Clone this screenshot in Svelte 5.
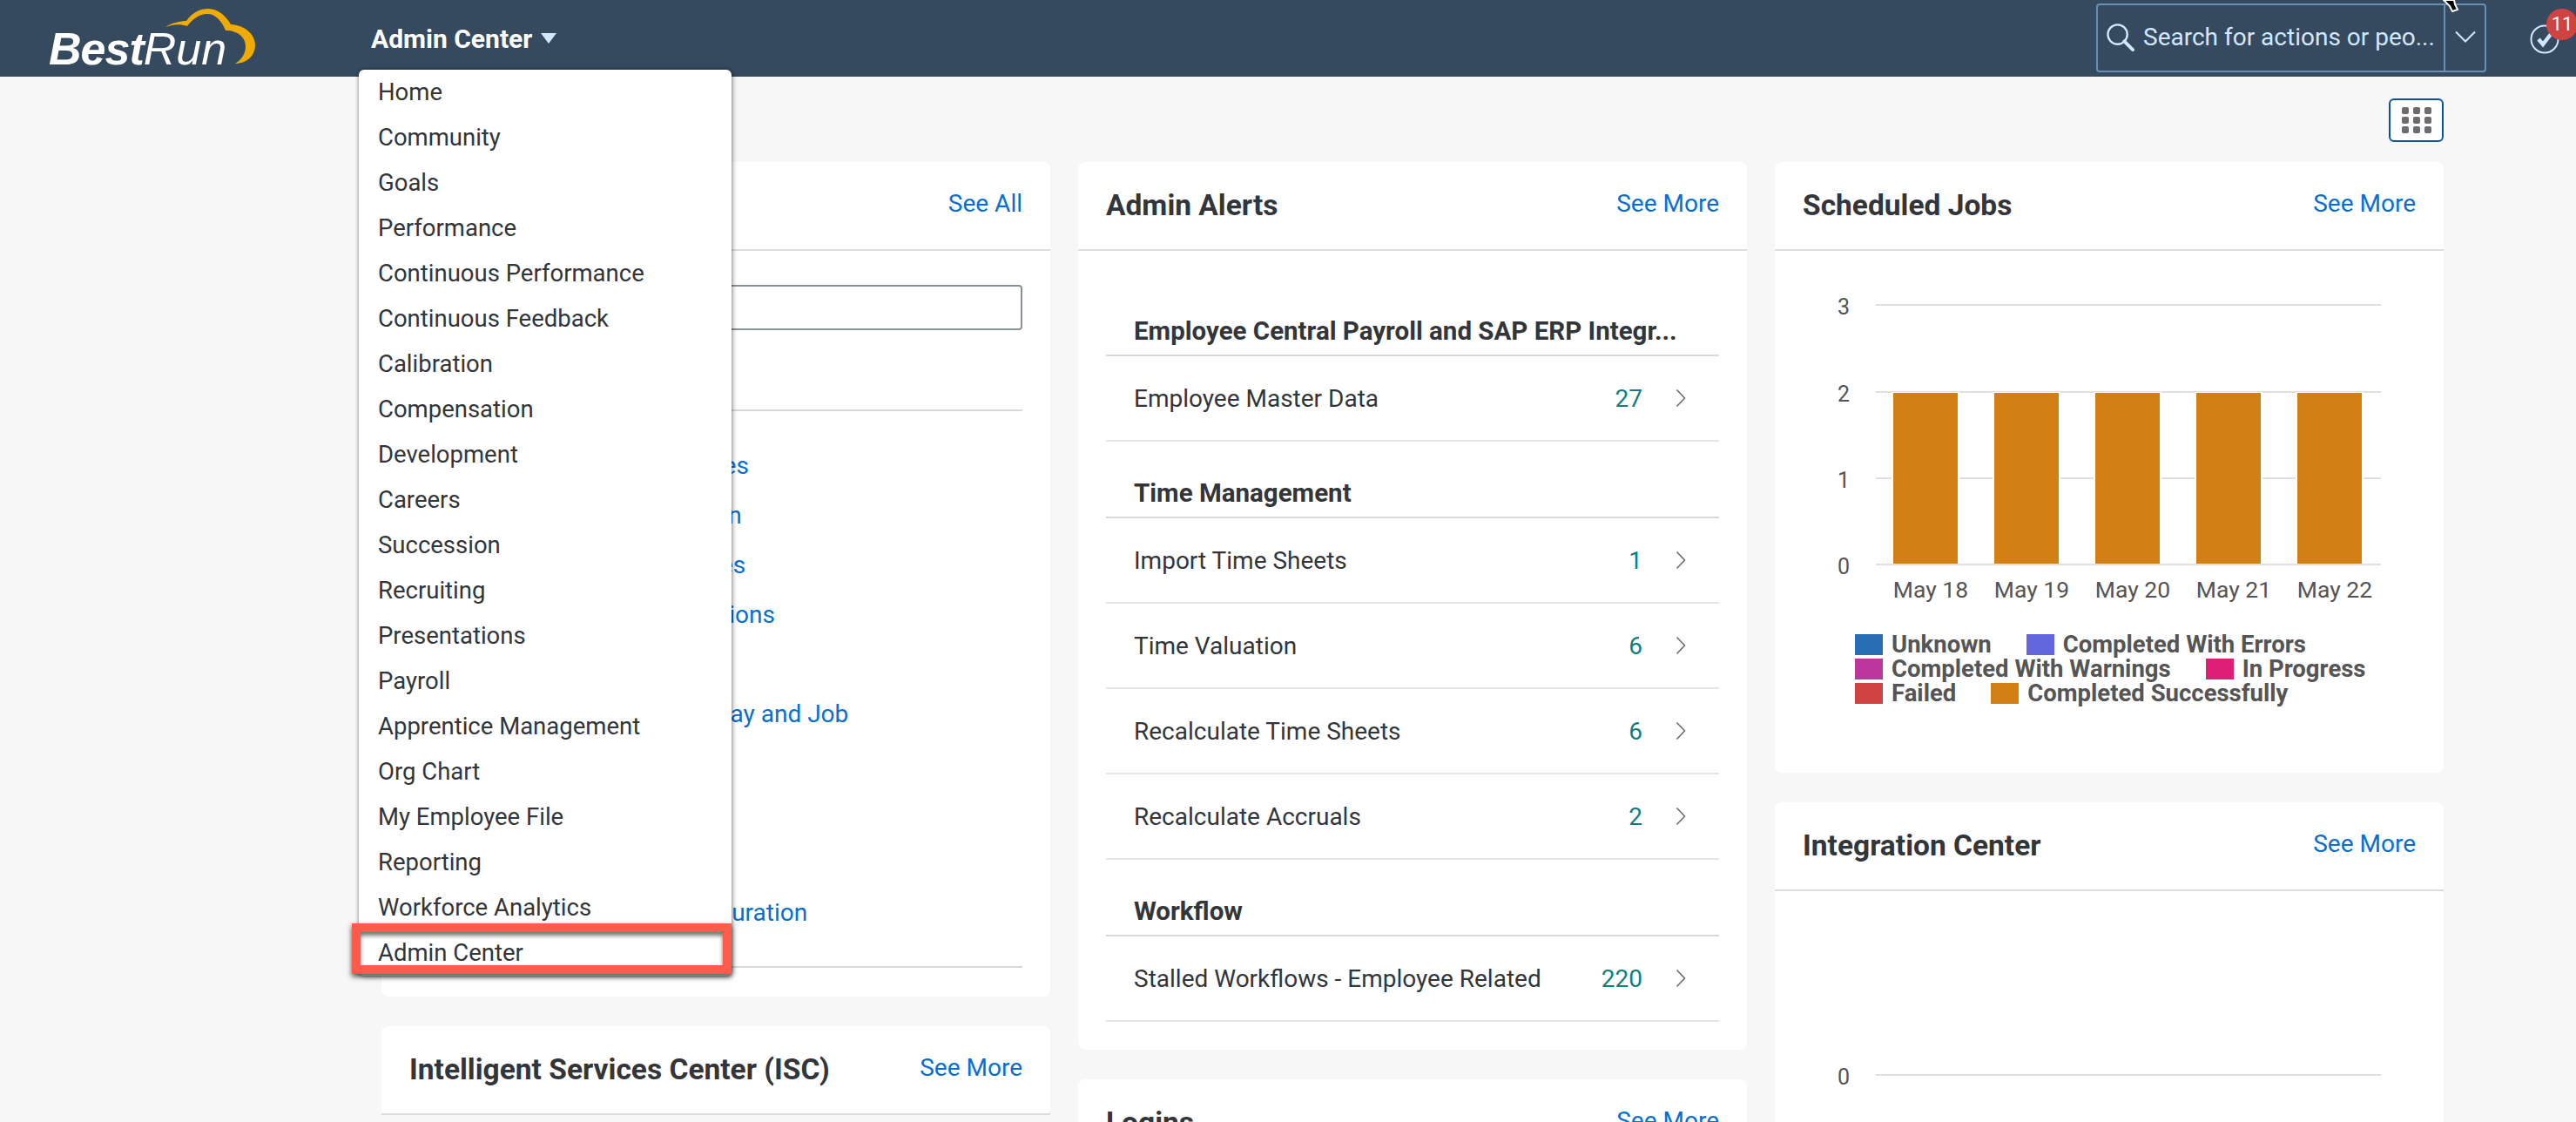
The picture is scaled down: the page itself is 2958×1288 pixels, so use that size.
<script lang="ts">
	const menu = [
		'Home', 'Community', 'Goals', 'Performance', 'Continuous Performance', 'Continuous Feedback',
		'Calibration', 'Compensation', 'Development', 'Careers', 'Succession', 'Recruiting',
		'Presentations', 'Payroll', 'Apprentice Management', 'Org Chart', 'My Employee File',
		'Reporting', 'Workforce Analytics', 'Admin Center'
	];

	// most of these sit behind the open menu, only the ends show
	const tools = [
		'Manage Permission Categories',
		'Manage Employee Information',
		'Configure Employee Templates',
		'Manage Integration Subscriptions',
		'Manage Data',
		'Manage Employee Records, Pay and Job',
		'Manage Users',
		'Import Users',
		'Update Users',
		'Update Employee Data Configuration'
	];

	const alerts = [
		{ title: 'Employee Central Payroll and SAP ERP Integr...', rows: [{ label: 'Employee Master Data', count: 27 }] },
		{
			title: 'Time Management',
			rows: [
				{ label: 'Import Time Sheets', count: 1 },
				{ label: 'Time Valuation', count: 6 },
				{ label: 'Recalculate Time Sheets', count: 6 },
				{ label: 'Recalculate Accruals', count: 2 }
			]
		},
		{ title: 'Workflow', rows: [{ label: 'Stalled Workflows - Employee Related', count: 220 }] }
	];

	const ticks = [
		{ label: '3', y: 62 },
		{ label: '2', y: 162 },
		{ label: '1', y: 261 },
		{ label: '0', y: 360 }
	];

	const bars = [
		{ label: 'May 18', x: 36 },
		{ label: 'May 19', x: 152 },
		{ label: 'May 20', x: 268 },
		{ label: 'May 21', x: 384 },
		{ label: 'May 22', x: 500 }
	];

	const legend = [
		{ label: 'Unknown', color: '#286eb4' },
		{ label: 'Completed With Errors', color: '#6367de' },
		{ label: 'Completed With Warnings', color: '#bd36a0' },
		{ label: 'In Progress', color: '#de1f77' },
		{ label: 'Failed', color: '#d04343' },
		{ label: 'Completed Successfully', color: '#d27f13' }
	];
</script>

<div class="page">
	<header class="shellbar">
		<div class="logo">
			<svg class="cloud" width="260" height="88" viewBox="0 0 260 88">
				<path
					fill="#f0ab00"
					d="M150 31C158 26 167 24 174 24C181 14 190 10 199 10C211 10 220 19 225 28C241 29 253 39 253 52C253 64 243 73 230 73C238 68 242 61 242 53C242 43 233 35 219 35C215 25 208 16 198 16C189 16 181 22 175 30C166 27 158 28 150 31Z"
				/>
			</svg>
			<span class="logo-text"><b>Best</b><i>Run</i></span>
		</div>

		<div class="module">
			Admin Center
			<span class="caret"></span>
		</div>

		<div class="search">
			<div class="search-field">
				<svg width="33" height="33" viewBox="0 0 34 34" fill="none" stroke="#d1e8ff">
					<circle cx="14" cy="14" r="11.5" stroke-width="2.4" />
					<path d="M22 22l10 10" stroke-width="4" stroke-linecap="round" />
				</svg>
				<span>Search for actions or peo...</span>
			</div>
			<div class="search-more">
				<svg width="24" height="14" viewBox="0 0 24 14" fill="none" stroke="#d1e8ff" stroke-width="2">
					<path d="M1 1.5l11 11 11-11" />
				</svg>
			</div>
		</div>

		<div class="todo">
			<svg width="34" height="34" viewBox="0 0 34 34" fill="none">
				<circle cx="17" cy="17" r="15.5" stroke="#d1e8ff" stroke-width="2" />
				<path d="M10 17l5 6 10-13" stroke="#d1e8ff" stroke-width="4.5" />
			</svg>
			<span class="badge">11</span>
		</div>

		<svg class="cursor" width="20" height="14" viewBox="0 0 20 14">
			<path d="M1 0l7 7 3 6 6-2-3-6-1-5z" fill="#000" stroke="#fff" stroke-width="2" />
		</svg>
	</header>

	<div class="toolbar">
		<button class="grid-btn" aria-label="Switch layout">
			{#each Array(9) as _}
				<span></span>
			{/each}
		</button>
	</div>

	<main class="columns">
		<div class="column">
			<section class="card tools">
				<div class="card-head">
					<h2>Tools</h2>
					<a href="#all">See All</a>
				</div>
				<div class="tools-body">
					<div class="tools-input"></div>
					<div class="tools-label">Most Used</div>
					<ul>
						{#each tools as tool}
							<li><a href="#tool">{tool}</a></li>
						{/each}
					</ul>
				</div>
			</section>

			<section class="card">
				<div class="card-head">
					<h2>Intelligent Services Center (ISC)</h2>
					<a href="#more">See More</a>
				</div>
			</section>
		</div>

		<div class="column">
			<section class="card">
				<div class="card-head">
					<h2>Admin Alerts</h2>
					<a href="#more">See More</a>
				</div>
				<div class="alerts">
					{#each alerts as group}
						<h3>{group.title}</h3>
						{#each group.rows as row}
							<div class="alert-row">
								<span class="alert-label">{row.label}</span>
								<span class="alert-count">{row.count}</span>
								<svg width="12" height="22" viewBox="0 0 12 22" fill="none" stroke="#6a6d70" stroke-width="1.6">
									<path d="M1.5 1.5l9 9.5-9 9.5" />
								</svg>
							</div>
						{/each}
					{/each}
				</div>
			</section>

			<section class="card">
				<div class="card-head">
					<h2>Logins</h2>
					<a href="#more">See More</a>
				</div>
			</section>
		</div>

		<div class="column">
			<section class="card jobs">
				<div class="card-head">
					<h2>Scheduled Jobs</h2>
					<a href="#more">See More</a>
				</div>
				<svg class="chart" width="768" height="420" viewBox="0 0 768 420">
					{#each ticks as tick}
						<line x1="116" x2="696" y1={tick.y} y2={tick.y} stroke="#e0e0e0" stroke-width="2" />
						<text x="79" y={tick.y + 11} text-anchor="middle" class="tick num">{tick.label}</text>
					{/each}
					{#each bars as bar}
						<rect x={bar.x + 98} y="162" width="78" height="197" fill="#fff" />
						<rect x={bar.x + 100} y="163" width="74" height="196" fill="#d27f13" />
						<text x={bar.x + 143} y="398" text-anchor="middle" class="tick">{bar.label}</text>
					{/each}
				</svg>
				<div class="legend">
					{#each legend as item}
						<div class="legend-item">
							<span class="swatch" style="background: {item.color}"></span>
							{item.label}
						</div>
					{/each}
				</div>
			</section>

			<section class="card">
				<div class="card-head">
					<h2>Integration Center</h2>
					<a href="#more">See More</a>
				</div>
				<svg class="chart" width="768" height="300" viewBox="0 0 768 300">
					<line x1="116" x2="696" y1="211" y2="211" stroke="#e0e0e0" stroke-width="2" />
					<text x="79" y="222" text-anchor="middle" class="tick num">0</text>
				</svg>
			</section>
		</div>
	</main>

	<nav class="menu">
		{#each menu as item}
			<div class="menu-item">{item}</div>
		{/each}
		<div class="callout"></div>
	</nav>
</div>

<style>
	:global(body) {
		margin: 0;
		background: #f7f7f7;
	}

	.page {
		position: relative;
		height: 1288px;
		overflow: hidden;
		background: #f7f7f7;
		font-family: Roboto, 'Liberation Sans', sans-serif;
		font-size: 28px;
		color: #32363a;
	}

	.shellbar {
		position: relative;
		display: flex;
		align-items: center;
		height: 88px;
		background: #354a5f;
	}

	.logo {
		position: relative;
		width: 426px;
		height: 88px;
		flex: none;
	}

	.cloud {
		position: absolute;
		left: 40px;
		top: 0;
		filter: blur(0.5px);
	}

	.logo-text {
		position: absolute;
		left: 56px;
		top: 26px;
		font-family: 'Liberation Sans', sans-serif;
		font-size: 52px;
		line-height: 60px;
		color: #fff;
		filter: blur(0.5px);
	}

	.logo-text b {
		font-style: italic;
		letter-spacing: -1px;
	}

	.module {
		display: flex;
		align-items: center;
		font-size: 30px;
		font-weight: 700;
		color: #fff;
	}

	.caret {
		margin-left: 10px;
		border-left: 9px solid transparent;
		border-right: 9px solid transparent;
		border-top: 12px solid #d1e8ff;
	}

	.search {
		display: flex;
		margin-left: auto;
		margin-right: 103px;
		width: 448px;
		height: 79px;
		margin-top: -1px;
		box-sizing: border-box;
		border: 2px solid #6c8eb2;
		border-radius: 4px;
		color: #d1e8ff;
		font-size: 28px;
	}

	.search-field {
		display: flex;
		align-items: center;
		gap: 10px;
		flex: 1;
		padding-left: 9px;
		padding-bottom: 2px;
		white-space: nowrap;
		border-right: 2px solid #6c8eb2;
	}

	.search-more {
		display: flex;
		align-items: center;
		justify-content: center;
		width: 45px;
		padding-bottom: 4px;
	}

	.todo {
		position: absolute;
		left: 2905px;
		top: 28px;
		width: 34px;
		height: 34px;
	}

	.todo svg {
		display: block;
	}

	.badge {
		position: absolute;
		left: 19px;
		top: -18px;
		width: 36px;
		height: 36px;
		border-radius: 50%;
		background: #d04343;
		color: #fff;
		font-size: 22px;
		line-height: 36px;
		text-align: center;
	}

	.cursor {
		position: absolute;
		left: 2805px;
		top: 0;
	}

	.toolbar {
		display: flex;
		justify-content: flex-end;
		height: 98px;
		box-sizing: border-box;
		width: 2806px;
		padding-top: 25px;
	}

	.grid-btn {
		display: grid;
		grid-template-columns: repeat(3, 8px);
		grid-auto-rows: 8px;
		gap: 3px 5px;
		align-content: center;
		justify-content: center;
		width: 63px;
		height: 50px;
		padding: 0;
		background: #fff;
		border: 2px solid #0854a0;
		border-radius: 6px;
	}

	.grid-btn span {
		background: #6a6d70;
		border-radius: 2px;
	}

	.columns {
		display: grid;
		grid-template-columns: repeat(3, 768px);
		gap: 32px;
		margin-left: 438px;
		align-items: start;
	}

	.column {
		display: flex;
		flex-direction: column;
		gap: 34px;
	}

	.card {
		background: #fff;
		border-radius: 8px;
	}

	.card-head {
		display: flex;
		justify-content: space-between;
		height: 102px;
		box-sizing: border-box;
		padding: 30px 32px 0;
		border-bottom: 2px solid #dcdcdc;
	}

	h2 {
		margin: 1px 0 0;
		font-size: 33.5px;
		line-height: 38px;
		font-weight: 700;
	}

	a {
		color: #0a6ed1;
		text-decoration: none;
	}

	.card-head a {
		line-height: 36px;
	}

	.tools-body {
		padding: 39px 32px 0;
	}

	.tools-input {
		height: 52px;
		box-sizing: border-box;
		border: 2px solid #89919a;
		border-radius: 4px;
	}

	.tools-label {
		height: 93px;
		box-sizing: border-box;
		padding-top: 46px;
		border-bottom: 2px solid #d9d9d9;
	}

	.tools ul {
		list-style: none;
		margin: 0;
		padding: 34px 0 33px;
		border-bottom: 2px solid #d9d9d9;
	}

	.tools li {
		height: 57px;
		line-height: 57px;
		white-space: nowrap;
	}

	.tools {
		height: 958px;
	}

	.alerts {
		padding: 33px 32px 32px;
	}

	h3 {
		display: flex;
		align-items: flex-end;
		height: 88px;
		box-sizing: border-box;
		margin: 0;
		padding: 0 32px 10px;
		font-size: 29.5px;
		line-height: 34px;
		font-weight: 700;
		white-space: nowrap;
		border-bottom: 2px solid #d9d9d9;
	}

	.alert-row {
		display: flex;
		align-items: center;
		height: 98px;
		box-sizing: border-box;
		padding: 0 38px 0 32px;
		border-bottom: 2px solid #e5e5e5;
	}

	.alert-label {
		flex: 1;
	}

	.alert-count {
		margin-right: 38px;
		color: #107e7d;
	}

	.jobs {
		height: 701px;
	}

	.chart {
		display: block;
	}

	.tick {
		font-size: 26.5px;
		fill: #545454;
	}

	.num {
		font-size: 25px;
	}

	.legend {
		display: flex;
		flex-wrap: wrap;
		width: 672px;
		margin: 18px 0 0 92px;
		font-size: 27.5px;
		font-weight: 700;
		line-height: 28px;
		color: #555;
	}

	.legend-item {
		display: flex;
		align-items: center;
		margin-right: 40px;
	}

	.swatch {
		width: 32px;
		height: 24px;
		margin-right: 10px;
	}

	.menu {
		position: absolute;
		left: 412px;
		top: 80px;
		width: 428px;
		background: #fff;
		border-radius: 6px;
		box-shadow: 0 0 4px rgba(0, 0, 0, 0.45), 2px 2px 6px rgba(0, 0, 0, 0.2);
		font-size: 27.5px;
	}

	.menu-item {
		height: 52px;
		padding-left: 22px;
		line-height: 52px;
	}

	.callout {
		position: absolute;
		left: -8px;
		top: 980px;
		width: 436px;
		height: 58px;
		box-sizing: border-box;
		border: 10px solid #ff5a4c;
		box-shadow: 0 3px 6px rgba(0, 0, 0, 0.7), inset 0 4px 5px rgba(0, 0, 0, 0.55);
	}
</style>
